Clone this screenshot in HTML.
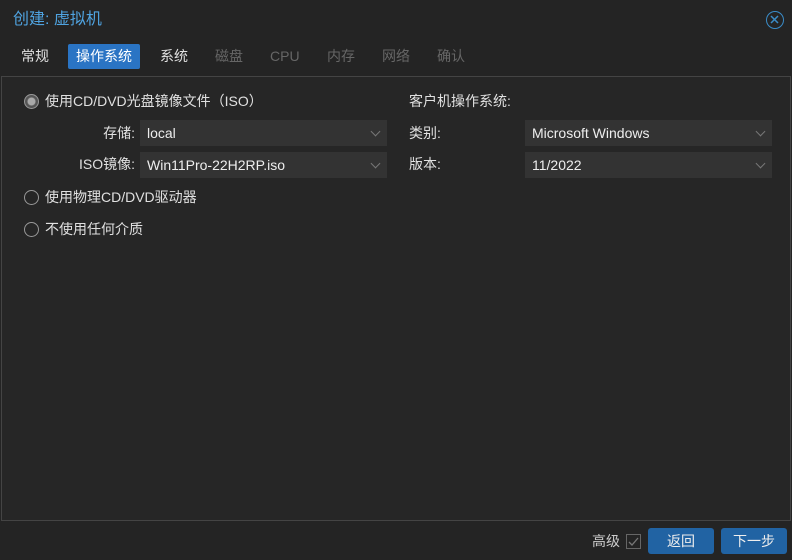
<!DOCTYPE html>
<html><head><meta charset="utf-8"><style>
*{box-sizing:border-box;margin:0;padding:0}
body{width:792px;height:560px;background:#242424;font-family:"Liberation Sans","Noto Sans CJK SC",sans-serif;font-size:14px;color:#e0e0e0;position:relative;overflow:hidden}
.a{position:absolute;white-space:nowrap;line-height:18px}
.title{left:13px;top:10px;font-size:16px;color:#4fa3e0;line-height:20px}
.close{left:766px;top:11px;width:18px;height:18px;border:1.5px solid #3a8cc8;border-radius:50%}
.tab{top:44px;height:25px;line-height:25px;padding:0 7px;font-size:14px}
.dis{color:#666}
.act{background:#2a74c4;color:#fff;border-radius:2px;padding:0 8px}
.panel{left:1px;top:76px;width:790px;height:445px;border:1px solid #444;background:#262626}
.radio{width:15px;height:15px;border:1.5px solid #999;border-radius:50%}
.radio.on{background:radial-gradient(circle,#aaa 0 3.5px,#555 4.5px)}
.combo{height:26px;background:#333;line-height:26px;padding-left:7px;color:#eee}
.combo:after{content:"";position:absolute;right:8px;top:8px;width:6px;height:6px;border-right:1px solid #777;border-bottom:1px solid #777;transform:rotate(45deg)}
.lbl{text-align:right}
.btn{top:528px;height:26px;line-height:26px;text-align:center;background:#2163a3;color:#eee;border-radius:3px}
</style></head><body>
<div class="a title">创建: 虚拟机</div>
<div class="a close"><svg width="15" height="15" viewBox="0 0 15 15" style="position:absolute;left:0;top:0"><path d="M4 4L11 11M11 4L4 11" stroke="#3a8cc8" stroke-width="1.5"/></svg></div>
<div class="a tab" style="left:14px">常规</div>
<div class="a tab act" style="left:68px">操作系统</div>
<div class="a tab" style="left:153px">系统</div>
<div class="a tab dis" style="left:208px">磁盘</div>
<div class="a tab dis" style="left:263px">CPU</div>
<div class="a tab dis" style="left:320px">内存</div>
<div class="a tab dis" style="left:375px">网络</div>
<div class="a tab dis" style="left:430px">确认</div>
<div class="a panel"></div>
<div class="a radio on" style="left:24px;top:94px"></div>
<div class="a" style="left:45px;top:92px">使用CD/DVD光盘镜像文件（ISO）</div>
<div class="a lbl" style="left:60px;width:75px;top:124px">存储:</div>
<div class="a combo" style="left:140px;top:120px;width:247px">local</div>
<div class="a lbl" style="left:60px;width:75px;top:155px">ISO镜像:</div>
<div class="a combo" style="left:140px;top:152px;width:247px">Win11Pro-22H2RP.iso</div>
<div class="a radio" style="left:24px;top:190px"></div>
<div class="a" style="left:45px;top:188px">使用物理CD/DVD驱动器</div>
<div class="a radio" style="left:24px;top:222px"></div>
<div class="a" style="left:45px;top:220px">不使用任何介质</div>
<div class="a" style="left:409px;top:92px">客户机操作系统:</div>
<div class="a" style="left:409px;top:124px">类别:</div>
<div class="a combo" style="left:525px;top:120px;width:247px">Microsoft Windows</div>
<div class="a" style="left:409px;top:155px">版本:</div>
<div class="a combo" style="left:525px;top:152px;width:247px">11/2022</div>
<div class="a" style="left:592px;top:532px;color:#ccc">高级</div>
<div class="a" style="left:626px;top:534px;width:15px;height:15px;border:1px solid #666"><svg width="13" height="13" viewBox="0 0 13 13" style="position:absolute;left:0;top:0"><path d="M2 7L5 10L11 3" stroke="#777" stroke-width="1.3" fill="none"/></svg></div>
<div class="a btn" style="left:648px;width:66px;line-height:26px">返回</div>
<div class="a btn" style="left:721px;width:66px;line-height:26px">下一步</div>
</body></html>
